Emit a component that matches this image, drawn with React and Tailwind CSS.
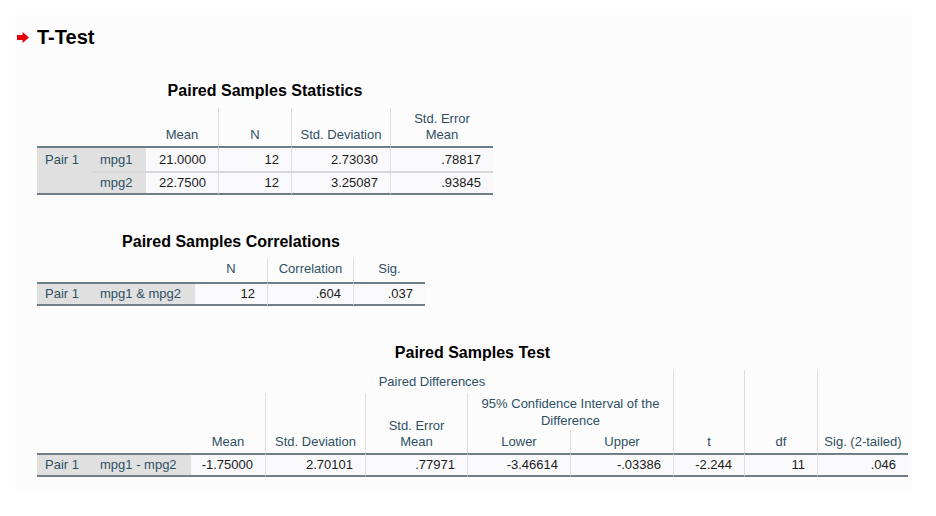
import React from "react";

// shared cell styles
const TOP = "border-t-2 border-t-[#6f7f8a]";
const BOT = "border-b-2 border-b-[#6f7f8a]";
const VL = "border-l border-l-[#dedede]";
const SEP = "border-t-2 border-t-[#d6d6d6]";
const head = "flex items-end justify-center pb-[3px] text-center leading-[16px] text-[#2f5064]";
const lab = "flex items-center pl-2 bg-[#e0e0e0] text-[#2f5064] whitespace-nowrap";
const num = "flex items-center justify-end pr-3 bg-[#f9f9fb] text-[#1a1a1a]";

const Caption = ({ children }) => (
  <div className="text-center text-[16px] font-bold leading-[20px] text-black">{children}</div>
);

const Arrow = () => (
  <svg width="12" height="11" viewBox="0 0 12 11">
    <path d="M0 3h5.5V0L12 5.5 5.5 11V8H0z" fill="#e8000b" />
  </svg>
);

const StatsTable = () => (
  <div className="w-[456px] mt-[32px]">
    <Caption>Paired Samples Statistics</Caption>
    <div className="grid grid-cols-[55px_54px_72px_73px_99px_103px] grid-rows-[38px_25px_24px] mt-[7px]">
      <div className="col-span-2" />
      <div className={head}>Mean</div>
      <div className={`${head} ${VL}`}>N</div>
      <div className={`${head} ${VL}`}>Std. Deviation</div>
      <div className={`${head} ${VL}`}>
        Std. Error
        <br />
        Mean
      </div>

      <div className={`row-span-2 bg-[#e0e0e0] text-[#2f5064] pl-2 ${TOP} ${BOT}`}>
        <div className="h-[23px] flex items-center">Pair 1</div>
      </div>
      <div className={`${lab} ${TOP}`}>mpg1</div>
      <div className={`${num} ${TOP}`}>21.0000</div>
      <div className={`${num} ${TOP} ${VL}`}>12</div>
      <div className={`${num} ${TOP} ${VL}`}>2.73030</div>
      <div className={`${num} ${TOP} ${VL}`}>.78817</div>

      <div className={`${lab} ${SEP} ${BOT}`}>mpg2</div>
      <div className={`${num} ${SEP} ${BOT}`}>22.7500</div>
      <div className={`${num} ${SEP} ${BOT} ${VL}`}>12</div>
      <div className={`${num} ${SEP} ${BOT} ${VL}`}>3.25087</div>
      <div className={`${num} ${SEP} ${BOT} ${VL}`}>.93845</div>
    </div>
  </div>
);

const CorrTable = () => (
  <div className="w-[388px] mt-[37px]">
    <Caption>Paired Samples Correlations</Caption>
    <div className="grid grid-cols-[55px_103px_72px_86px_72px] grid-rows-[24px_24px] mt-[6px]">
      <div className="col-span-2" />
      <div className={`${head} pb-[5px]`}>N</div>
      <div className={`${head} pb-[5px] ${VL}`}>Correlation</div>
      <div className={`${head} pb-[5px] ${VL}`}>Sig.</div>

      <div className={`${lab} ${TOP} ${BOT}`}>Pair 1</div>
      <div className={`${lab} ${TOP} ${BOT}`}>mpg1 &amp; mpg2</div>
      <div className={`${num} ${TOP} ${BOT}`}>12</div>
      <div className={`${num} ${TOP} ${BOT} ${VL}`}>.604</div>
      <div className={`${num} ${TOP} ${BOT} ${VL}`}>.037</div>
    </div>
  </div>
);

const TestTable = () => (
  <div className="w-[871px] mt-[37px]">
    <Caption>Paired Samples Test</Caption>
    <div className="grid grid-cols-[55px_99px_74px_100px_102px_103px_103px_71px_73px_91px] grid-rows-[23px_37px_23px_24px] mt-[7px]">
      <div className="col-start-1 col-end-3 row-start-1 row-end-4" />
      <div className="col-start-3 col-end-8 row-start-1 flex items-center justify-center text-[#2f5064]">
        Paired Differences
      </div>
      <div className={`col-start-3 row-start-2 row-end-4 ${head}`}>Mean</div>
      <div className={`col-start-4 row-start-2 row-end-4 ${head} ${VL}`}>Std. Deviation</div>
      <div className={`col-start-5 row-start-2 row-end-4 ${head} ${VL}`}>
        Std. Error
        <br />
        Mean
      </div>
      <div className={`col-start-6 col-end-8 row-start-2 flex items-center justify-center text-center leading-[17px] text-[#2f5064] ${VL}`}>
        95% Confidence Interval of the
        <br />
        Difference
      </div>
      <div className={`col-start-6 row-start-3 ${head} ${VL}`}>Lower</div>
      <div className={`col-start-7 row-start-3 ${head} ${VL}`}>Upper</div>
      <div className={`col-start-8 row-start-1 row-end-4 ${head} ${VL}`}>t</div>
      <div className={`col-start-9 row-start-1 row-end-4 ${head} ${VL}`}>df</div>
      <div className={`col-start-10 row-start-1 row-end-4 ${head} ${VL}`}>Sig. (2-tailed)</div>

      <div className={`row-start-4 col-start-1 ${lab} ${TOP} ${BOT}`}>Pair 1</div>
      <div className={`row-start-4 col-start-2 ${lab} ${TOP} ${BOT}`}>mpg1 - mpg2</div>
      <div className={`row-start-4 col-start-3 ${num} ${TOP} ${BOT}`}>-1.75000</div>
      <div className={`row-start-4 col-start-4 ${num} ${TOP} ${BOT} ${VL}`}>2.70101</div>
      <div className={`row-start-4 col-start-5 ${num} ${TOP} ${BOT} ${VL}`}>.77971</div>
      <div className={`row-start-4 col-start-6 ${num} ${TOP} ${BOT} ${VL}`}>-3.46614</div>
      <div className={`row-start-4 col-start-7 ${num} ${TOP} ${BOT} ${VL}`}>-.03386</div>
      <div className={`row-start-4 col-start-8 ${num} ${TOP} ${BOT} ${VL}`}>-2.244</div>
      <div className={`row-start-4 col-start-9 ${num} ${TOP} ${BOT} ${VL}`}>11</div>
      <div className={`row-start-4 col-start-10 ${num} ${TOP} ${BOT} ${VL}`}>.046</div>
    </div>
  </div>
);

export default function App() {
  return (
    <div className="w-[936px] h-[516px] bg-white pt-[15px] pl-[15px] font-['Liberation_Sans',Arial,sans-serif] text-[13px]">
      <div className="w-[897px] h-[477px] bg-[#fcfcfc] pt-[10px] pl-[2px]">
        <div className="flex items-center h-[24px]">
          <Arrow />
          <span className="ml-[8px] text-[20px] font-bold leading-[24px] text-black">T-Test</span>
        </div>
        <div className="ml-[20px]">
          <StatsTable />
          <CorrTable />
          <TestTable />
        </div>
      </div>
    </div>
  );
}
